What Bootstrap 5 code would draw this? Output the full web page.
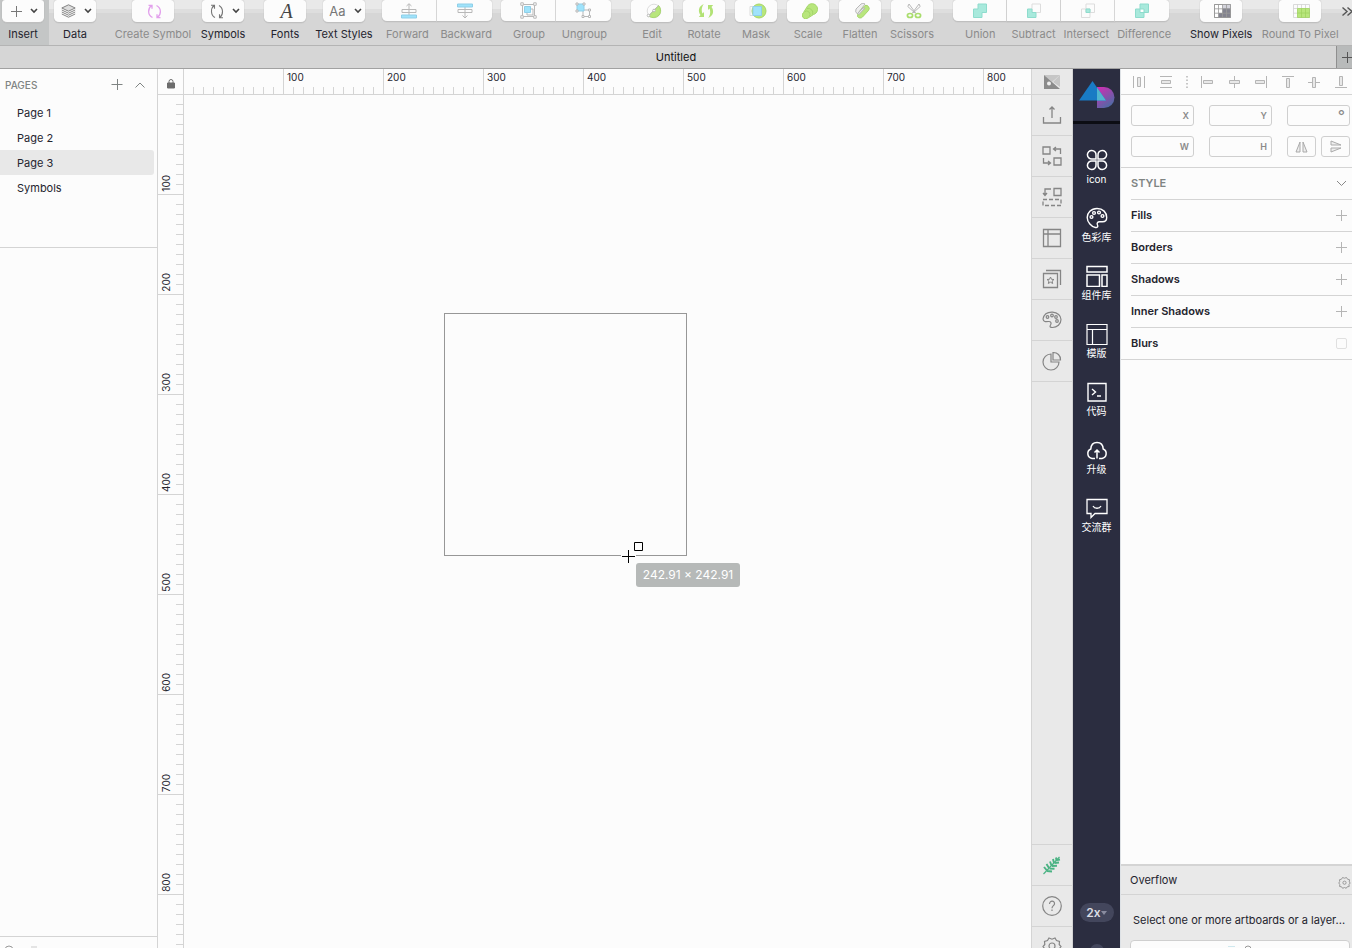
<!DOCTYPE html>
<html lang="en">
<head>
<meta charset="utf-8">
<meta name="viewport" content="width=device-width, initial-scale=1">
<title>Untitled</title>
<link href="https://cdn.jsdelivr.net/npm/bootstrap@5.3.0/dist/css/bootstrap.min.css" rel="stylesheet">
<style>
:root{--line:#d4d4d4;--ink:#24242e;--dim:#8b8b8b;--paper:#fcfcfc;--rail:#e9e9e9;--dark:#2b2d40}
body{font-family:Inter,"Liberation Sans","Noto Sans CJK SC",sans-serif;font-size:11px;line-height:16px;color:var(--ink);background:var(--paper)}
svg{display:block;flex:none}
svg:not([fill]){fill:none}
svg:not([stroke]){stroke:currentColor}
button{font:inherit;color:inherit;border:0;background:none;padding:0}
/* toolbar */
.toolbar{height:46px;border-bottom:1px solid #b4b4b4;background:linear-gradient(#e9e9e9 9px,#dedede 9px,#dedede 13px,#d6d6d6 13px)}
.tool{width:42px;flex:none;display:flex;flex-direction:column;align-items:center;white-space:nowrap;margin-left:10px}
.tool.first{width:49px;margin-left:0;padding-right:3px;background:#c4c6c6;align-self:stretch}
.tool.near{margin-left:8px}.tool.tight{margin-left:5px}.tool.far{margin-left:18px}.seg+.tool{margin-left:20px}
.tool.mid{width:46px}.tool.wide{width:60px}.tool.xwide{width:78px}
.tool button,.seg button{height:23px;background:var(--paper);border:solid #bfbfbf;border-width:0 0 1px;box-shadow:0 0 1px #9a9a9a;display:flex;align-items:center;justify-content:center;color:#777}
.tool button{width:42px;border-radius:3px 3px 5px 5px;gap:8px;padding-left:3px}
.tool span,.seg span{margin-top:3px}
.seg{margin-left:9px;flex:none}
.seg.near{margin-left:8px}
.seg.far{margin-left:18px}
.seg .btn-group button{width:55px;height:22px;margin-bottom:1px;border-right:1px solid #ddd}
.seg.four .btn-group button{width:54px}
.seg .btn-group button:first-child{border-radius:3px 0 0 5px}
.seg .btn-group button:last-child{border-radius:0 3px 5px 0;border-right:0}
.off,.off button{color:var(--dim)}
.off button,.tool.off button{color:#b8b8b8}
.letter{font:italic 20px/22px "Liberation Serif",serif;color:#444}
.aa{font-size:13px;color:#777}
.tabbar{height:23px;background:#d6d6d6;border-bottom:1px solid #a1a1a1;color:#111}
.tabadd{width:16px;background:#b8baba;border-left:1px solid #8f8f8f;overflow:hidden}
/* pages */
.pages{width:158px;border-right:1px solid var(--line)}
.cap{height:31px;padding-left:5px;font-size:10px;font-weight:500;color:#7f8483}
.pagelist{height:148px;border-bottom:1px solid var(--line)}
.pagelist a{display:block;height:25px;line-height:26px;padding-left:17px;margin-right:3px;color:var(--ink);text-decoration:none;border-radius:0 3px 3px 0}
.pagelist a.active{background:#e8e8e8}
.pagefoot{height:12px;border-top:1px solid var(--line);overflow:hidden;color:#999}
/* rulers */
.corner{width:26px;border-right:1px solid var(--line)}
.rulers{height:26px;border-bottom:1px solid var(--line);font-size:10px}
.hruler{background:repeating-linear-gradient(90deg,transparent 0 9px,var(--line) 9px 10px) bottom/100% 7px no-repeat}
.hruler span{width:100px;flex:none;border-right:1px solid var(--line);padding-left:3px}
.vruler{width:26px;border-right:1px solid var(--line);font-size:10px;background:repeating-linear-gradient(transparent 0 9px,var(--line) 9px 10px) right/7px 100% no-repeat}
.vruler div{height:100px;flex:none;border-bottom:1px solid var(--line);display:flex;align-items:flex-end;padding-bottom:2px}
.vruler span{writing-mode:vertical-rl;transform:rotate(180deg);line-height:16px}
.shape{left:260px;top:218px;width:243px;height:243px;border:1px solid #979797}
.cursor{left:436px;top:445px;color:#000}
.tip{left:452px;top:468px;width:104px;height:24px;line-height:24px;border-radius:3px;background:#b6b9b8;color:#fff;text-align:center;font-size:12px}
/* rails */
.rail{width:42px;background:var(--rail);border:solid var(--line);border-width:0 1px;color:#858585}
.rail button{height:41px;flex:none;border-bottom:1px solid var(--line);display:flex;align-items:center;justify-content:center}
.rail .short{height:26px}
.rail .foot{height:104px;overflow:hidden}
.rail .foot button{border-top:1px solid var(--line);border-bottom:0}
.kit{width:47px;background:var(--dark);color:#fff;font-size:10px;line-height:14px;font-family:Inter,"Noto Sans CJK SC",sans-serif}
.kit .brand{height:55px;border-bottom:3px solid #0c0d14;width:100%;display:flex;align-items:center;justify-content:center}
.kit .item{height:58px;display:flex;flex-direction:column;align-items:center;gap:1px;padding-top:25px}
.kit .item svg{width:22px;height:22px}
.pill{width:34px;height:19px;border-radius:10px;background:#43465c;color:#dcdde4;font-size:12px;font-weight:600}
.pill.cut{width:14px;height:14px;margin:22px 0 -10px}
/* inspector */
.inspector{width:232px}
.align{height:26px;border-bottom:1px solid var(--line);padding:0 4px 0 11px;color:#b5b5b5}
.fields{display:grid;grid-template-columns:63px 63px 63px;gap:10px 15px;padding:10px 0 10px 10px;border-bottom:1px solid var(--line)}
.field{position:relative}
.field input{width:100%;height:21px;border:1px solid #cfcfcf;border-radius:3px;background:#fcfcfc;padding:0 16px 0 4px;display:block;font-size:10px}
.field label{position:absolute;right:5px;top:3px;font-size:9px;font-weight:600;color:#8a8a8a}
.flip button{width:29px;height:21px;border:1px solid #cfcfcf;border-radius:3px;display:flex;align-items:center;justify-content:center;color:#aaa}
.prop{height:32px;margin-left:10px;padding:0 5px 1px 0;border-bottom:1px solid var(--line);font-weight:600;display:flex;align-items:center;justify-content:space-between}
.prop.last{margin-left:0;padding-left:10px}
.prop button{color:#b5b5b5}
.prop .form-check-input{width:11px;height:11px;margin:0;border:1px solid #e0e0e0;border-radius:2px;background:#fcfcfc}
.prop.head{color:#7f8483}
.overflowbox{height:84px;background:var(--rail);border-top:2px solid var(--line);overflow:hidden}
.overflowbox h2{font-size:11px;line-height:16px;font-weight:400;margin:0}
.overflowbox header{height:29px;border-bottom:1px solid var(--line);padding:0 1px 0 9px}
.overflowbox p{margin:17px 0 12px 12px;white-space:nowrap}
.bigbtn{width:220px;height:28px;margin-left:9px;background:var(--paper);border:1px solid #cfcfcf;border-radius:4px;overflow:hidden}
</style>
<script src="https://cdn.jsdelivr.net/npm/bootstrap@5.3.0/dist/js/bootstrap.bundle.min.js"></script>
</head>
<body class="vh-100 overflow-hidden d-flex flex-column">

<header class="toolbar d-flex flex-shrink-0 overflow-hidden">
  <div class="tool first"><button aria-label="Insert"><svg width="11" height="11"><path d="M0 5.5h11M5.5 0v11"/></svg><svg width="8" height="6" stroke="#444" stroke-width="1.6"><path d="M1 1l3 3 3-3"/></svg></button><span>Insert</span></div>
  <div class="tool tight"><button aria-label="Data"><svg width="15" height="14" stroke-width=".9"><path d="M.8 4 7.5.8 14.2 4 7.5 7.2z" fill="#ddd"/><path d="M.8 6l6.7 3.200L14.2 6M.8 8l6.7 3.200L14.2 8M.8 10l6.7 3.200L14.2 10"/></svg><svg width="8" height="6" stroke="#444" stroke-width="1.6"><path d="M1 1l3 3 3-3"/></svg></button><span>Data</span></div>
  <div class="tool far xwide off"><button aria-label="Create Symbol"><svg width="15" height="15" stroke="#e2a0ec" stroke-width="1.3"><path d="M5.500 13.500C.5 11 .5 4.500 4.500 1.500M1.500 1.300h3.500v3.500M9.500 1.500c5 2.500 5 9 1 12M13.500 13.700H10v-3.500"/></svg></button><span>Create Symbol</span></div>
  <div class="tool near mid"><button aria-label="Symbols"><svg width="14" height="15" stroke-width="1.1"><path d="M5 13.500C.5 11 .5 4.500 4 1.500M1 1.300h3.500v3.500M9 1.500c4.500 2.500 4.500 9 1 12M13 13.700H9.500v-3.500"/></svg><svg width="8" height="6" stroke="#444" stroke-width="1.6"><path d="M1 1l3 3 3-3"/></svg></button><span>Symbols</span></div>
  <div class="tool far"><button aria-label="Fonts"><i class="letter">A</i></button><span>Fonts</span></div>
  <div class="tool near wide"><button aria-label="Text Styles"><b class="aa fw-normal">Aa</b><svg width="8" height="6" stroke="#444" stroke-width="1.6"><path d="M1 1l3 3 3-3"/></svg></button><span>Text Styles</span></div>

  <div class="seg near off">
    <div class="btn-group d-flex">
      <button aria-label="Forward"><svg width="16" height="16"><path d="M8 12V1M5.500 3 8 .7 10.500 3M1 6.500h14v3H1z"/><path d="M.5 12h15v3H.5z" fill="#9fe3fb" stroke="#8fcfe8"/></svg></button>
      <button aria-label="Backward"><svg width="16" height="16"><path d="M8 4v11M5.500 12.500 8 15l2.500-2.500M1 6.500h14v3H1z"/><path d="M.5 1h15v3H.5z" fill="#9fe3fb" stroke="#8fcfe8"/></svg></button>
    </div>
    <div class="d-flex justify-content-between ps-1"><span>Forward</span><span>Backward</span></div>
  </div>
  <div class="seg off">
    <div class="btn-group d-flex">
      <button aria-label="Group"><svg width="17" height="17"><path d="M2.500 2.500h12v12h-12zM8 7h5v6H7v-3"/><path d="M4.500 4.500h6v6h-6z" fill="#9fe3fb" stroke="#8fcfe8"/><path d="M.8.8h2.500v2.500H.8zM13.700.8h2.500v2.500h-2.500zM.8 13.700h2.500v2.500H.8zM13.700 13.700h2.500v2.500h-2.500z" fill="#fff"/></svg></button>
      <button aria-label="Ungroup"><svg width="17" height="17"><path d="M8 8h6.500v6.500H8z"/><path d="M2 2h7v7H2z" fill="#9fe3fb" stroke="#8fcfe8"/><path d="M1 1h2v2H1zM8 1h2v2H8zM1 8h2v2H1zM7 13.500h2v2H7zM13.500 13.500h2v2h-2zM13.500 7h2v2h-2z" fill="#fff"/></svg></button>
    </div>
    <div class="d-flex justify-content-between ps-2 pe-1"><span class="ps-1">Group</span><span>Ungroup</span></div>
  </div>

  <div class="tool off"><button aria-label="Edit"><svg width="16" height="16"><circle cx="8" cy="8" r="6.800" stroke="#ddd"/><path d="M2.500 13C6 15.500 12 15 14 10.500c1-3 .5-6-1.500-8z" fill="#b8e67c" stroke="#a5d66a"/><path d="M2.500 13 12.500 2.500"/><circle cx="2.500" cy="12.500" r="1.300" fill="#fff"/><circle cx="8" cy="7.500" r="1.300" fill="#fff"/></svg></button><span>Edit</span></div>
  <div class="tool off"><button aria-label="Rotate"><svg width="16" height="16" stroke="none" fill="#b2e275"><path d="M6 1C0 3 0 9 2.500 12L.8 14H6V9L4.500 10.500C3 7 4 3 6 1zM10 15c6-2 6-8 3.500-11L15.200 2H10v5l1.500-1.500C13 9 12 13 10 15z"/></svg></button><span>Rotate</span></div>
  <div class="tool off"><button aria-label="Mask"><svg width="18" height="16"><path d="M1 3.500h8v9H1z" stroke="#ddd"/><circle cx="10" cy="8" r="7" fill="#b8e67c" stroke="#a5d66a"/><path d="M4 3.500h8.500v9H4z" fill="#9fe3fb" stroke="#8fcfe8"/></svg></button><span>Mask</span></div>
  <div class="tool off"><button aria-label="Scale"><svg width="16" height="16" fill="#b8e67c" stroke="#a5d66a"><path d="M1.500 9.500 5 4a5.500 5.500 0 1 1 6.500 7.500L6 15a3 3 0 0 1-4.500-5.500z"/><path d="M2.500 9a3 3 0 0 1 4.500 4.500M5 5.500a4.500 4.500 0 0 1 5.500 6"/></svg></button><span>Scale</span></div>
  <div class="tool off"><button aria-label="Flatten"><svg width="16" height="16"><path d="M2 6l5-5a3 3 0 0 1 4 0L3.500 11A4 4 0 0 1 2 6z" fill="#eee"/><path d="M4 10 11 2.500a3.200 3.200 0 0 1 3.500 5l-6 6.500A3.200 3.200 0 0 1 3.500 13.500z" fill="#b8e67c" stroke="#a5d66a"/><path d="M3.500 10.500 9 5l2 0-6 6.500z" fill="#e4e4e4"/></svg></button><span>Flatten</span></div>
  <div class="tool near mid off"><button aria-label="Scissors"><svg width="16" height="16"><path d="M3 1l7 9.500M1.800 3.500 9 10M3 1 1.800 3.500M13 1 6 10.500M14.200 3.500 7 10M13 1l1.200 2.500"/><ellipse cx="4" cy="12.500" rx="2.600" ry="2" stroke="#a9dd6c" stroke-width="1.7"/><ellipse cx="12" cy="12.500" rx="2.600" ry="2" stroke="#a9dd6c" stroke-width="1.7"/></svg></button><span>Scissors</span></div>

  <div class="seg far four off">
    <div class="btn-group d-flex">
      <button aria-label="Union"><svg width="16" height="16"><path d="M6 1h8.500v8.500H10v5H1.500V6H6z" fill="#a8e9dc" stroke="#8edccd"/></svg></button>
      <button aria-label="Subtract"><svg width="16" height="16"><path d="M6 1h8.500v8.500H6z" stroke="#ddd"/><path d="M1.500 6H6v3.500h4v5H1.500z" fill="#a8e9dc" stroke="#8edccd"/></svg></button>
      <button aria-label="Intersect"><svg width="16" height="16" stroke="#ddd"><path d="M6 1h8.500v8.500H6zM1.500 6H10v8.500H1.500z"/><path d="M6 6h4v3.500H6z" fill="#a8e9dc" stroke="#8edccd"/></svg></button>
      <button aria-label="Difference"><svg width="16" height="16"><path d="M6 1h8.500v8.500H10v5H1.500V6H6z" fill="#a8e9dc" stroke="#8edccd"/><path d="M6 6h4v3.500H6z" fill="#fff" stroke="#8edccd"/></svg></button>
    </div>
    <div class="d-flex gap-2 ps-2"><span class="ps-1 pe-2">Union</span><span>Subtract</span><span>Intersect</span><span>Difference</span></div>
  </div>

  <div class="tool wide"><button aria-label="Show Pixels"><svg width="17" height="14" stroke="#999"><path d="M.5.5h16v13H.5z" fill="#fff"/><path d="M8.500.5h8v5h-8z" fill="#d4d4dc" stroke="none"/><path d="M4.500 9h4V4.500h8v9h-12z" fill="#83838f" stroke="none"/><path d="M.5 4.800h16M.5 9.200h16M4.500.5v13M8.500.5v13M12.500.5v13M.5.5h16v13H.5z" stroke-width=".8"/></svg></button><span>Show Pixels</span></div>
  <div class="tool xwide off"><button aria-label="Round To Pixel"><svg width="17" height="14" stroke="#d0d0d0"><path d="M4.500 4.500h12v9h-12z" fill="#b8e67c" stroke="none"/><path d="M.5.5h16v13H.5zM.5 9.200h4M4.500.5v4M8.500.5v4M12.500.5v4M.5 4.500h4" stroke-width=".8"/><path d="M4.500 4.500h12v9h-12zM8.500 4.500v9M12.500 4.500v9M4.500 9h12" stroke="#a0d35f" stroke-width=".8"/></svg></button><span>Round To Pixel</span></div>
  <button class="ms-auto align-self-start mt-1" aria-label="More tools"><svg width="10" height="14" stroke="#555" stroke-width="1.4"><path d="M.5 3.500 5 7.500.5 11.500M5.500 3.500 10 7.500l-4.500 4"/></svg></button>
</header>

<div class="tabbar d-flex flex-shrink-0">
  <div class="flex-fill text-center lh-lg ps-3">Untitled</div>
  <button class="tabadd d-flex align-items-center ps-1" aria-label="New tab"><svg width="12" height="12" stroke="#555"><path d="M1 6.500h11M6.500 1v11"/></svg></button>
</div>

<main class="d-flex flex-fill overflow-hidden">
  <aside class="pages d-flex flex-column flex-shrink-0">
    <div class="d-flex align-items-center cap pe-2 gap-2"><span class="me-auto">PAGES</span>
      <button aria-label="Add page" class="me-1"><svg width="12" height="12"><path d="M.5 5.500h11M6.500 0v11"/></svg></button>
      <button aria-label="Collapse" class="me-1"><svg width="10" height="6"><path d="M.5 5.500 5 1l4.500 4.500"/></svg></button></div>
    <nav class="pagelist"><a href="#">Page 1</a><a href="#">Page 2</a><a href="#" class="active">Page 3</a><a href="#">Symbols</a></nav>
    <div class="pagefoot mt-auto d-flex ps-1 pt-2 gap-3"><svg width="10" height="10"><circle cx="5" cy="5" r="4"/></svg><svg width="10" height="10" stroke="#ccc"><path d="M1 2h6"/></svg></div>
  </aside>

  <section class="flex-fill d-flex flex-column overflow-hidden">
    <div class="rulers d-flex flex-shrink-0">
      <div class="corner flex-shrink-0 d-flex align-items-center justify-content-center pt-1"><svg width="8" height="10" stroke="#6c6c6c"><path d="M.5 4h7v5h-7z" fill="#6c6c6c"/><path d="M2 4V2.500a2 2 0 0 1 4 0V4"/></svg></div>
      <div class="hruler flex-fill d-flex overflow-hidden"><span></span><span>100</span><span>200</span><span>300</span><span>400</span><span>500</span><span>600</span><span>700</span><span>800</span></div>
    </div>
    <div class="d-flex flex-fill overflow-hidden">
      <div class="vruler flex-shrink-0 overflow-hidden d-flex flex-column"><div><span>100</span></div><div><span>200</span></div><div><span>300</span></div><div><span>400</span></div><div><span>500</span></div><div><span>600</span></div><div><span>700</span></div><div><span>800</span></div><div></div></div>
      <div class="flex-fill position-relative overflow-hidden">
        <div class="shape position-absolute"></div>
        <svg class="cursor position-absolute" width="26" height="26"><path d="M1 15.500h15" stroke="#fcfcfc" stroke-width="3"/><path d="M2 16.500h13M8.500 10v13M14.500 2.500h8v8h-8z"/></svg>
        <div class="tip position-absolute">242.91 × 242.91</div>
      </div>
    </div>
  </section>

  <nav class="rail d-flex flex-column flex-shrink-0" aria-label="Plugins">
    <button class="short" aria-label="Craft"><svg width="16" height="14" stroke="none"><path d="M0 0h16L8 7z" fill="#c6c6c6"/><path d="M0 0l16 14H0z" fill="#8b8b8b"/><path d="M16 0v12L9 7z" fill="#c6c6c6"/><circle cx="5" cy="8.500" r="2" fill="#eee"/></svg></button>
    <button aria-label="Export"><svg width="20" height="20" stroke-width="1.3"><path d="M1.500 12v6h17v-6M10 13V2M7.500 4.500 10 2l2.500 2.500"/></svg></button>
    <button aria-label="Swap symbols"><svg width="20" height="20" stroke-width="1.3"><path d="M1 1h7v7H1zM12 12h7v7h-7zM18.500 8V3H12M14 1l-2.500 2L14 5M1.500 12v5H8M6 15l2.500 2L6 19"/></svg></button>
    <button aria-label="Replace"><svg width="20" height="20" stroke-width="1.3"><path d="M12 1.500h7v7h-7zM9 2H3v6M1 6l2 2.500L5 6"/><path d="M1 12.500h18v6H1z" stroke-dasharray="4 2"/></svg></button>
    <button aria-label="Template"><svg width="20" height="20" stroke-width="1.3"><path d="M1.500 1.500h17v17h-17zM6 1.500v17M1.500 6h17"/></svg></button>
    <button aria-label="Library"><svg width="20" height="20" stroke-width="1.3"><path d="M1.500 4.500h14v14h-14zM4 1.500h14.500V16"/><path d="M8.500 8l1 2.300 2.500.2-1.900 1.600.6 2.400-2.200-1.300-2.200 1.300.6-2.400L5 10.500l2.500-.2z" stroke-width="1"/></svg></button>
    <button aria-label="Palette"><svg width="20" height="18" stroke-width="1.2"><path d="M1 8C2 3 6 1 10.500 1.200 15.500 1.500 19 4.500 19 8.500c0 4.500-4 8-8.500 8-2.500 0-3-1-2-2.500 1.200-2 .5-3.700-2-3.500-3 .3-5 .5-5.500-2.500z"/><circle cx="5.500" cy="6" r="1.300"/><circle cx="10" cy="4.500" r="1.300"/><circle cx="14" cy="6" r="1.300"/><circle cx="15" cy="10" r="1.300"/></svg></button>
    <button aria-label="Charts"><svg width="20" height="20" stroke-width="1.2"><path d="M9 3a8 8 0 1 0 8 8H9z"/><path d="M11 1.500A7 7 0 0 1 18.500 9H11z"/></svg></button>
    <div class="foot mt-auto d-flex flex-column">
      <button aria-label="Fern"><svg width="20" height="20" stroke="#4bb384" stroke-width="1.9"><path d="M1.500 19 17.500 2" stroke-width="1.2"/><path d="M5 15.500l-3-3.500M7 13 4.500 9M9.500 10.500 8 6.500M12 8l-1-4M14.500 5.500l-.5-3M5 16l5 .5M7.500 13.500l5 .3M10 11l5-.2M12.500 8l4.500-.5M15 5l3-.5"/></svg></button>
      <button aria-label="Help"><svg width="22" height="22" stroke-width="1.2"><circle cx="11" cy="11" r="9.300"/><path d="M8.500 9c0-4 5.500-3.500 5 0-.2 1.600-2.500 2-2.500 4.200M11 14.500V16"/></svg></button>
      <button aria-label="Settings" class="align-items-start pt-2"><svg width="20" height="20" stroke-width="1.2"><path d="M7 3l3 1.200L13 3l1.500 2.500 3 1-.3 3 1.800 2-1.800 2.500.3 3H2.500l.3-3L1 11.500l1.800-2-.3-3 3-1z"/><circle cx="10" cy="11" r="3"/></svg></button>
    </div>
  </nav>

  <nav class="kit d-flex flex-column align-items-center flex-shrink-0 overflow-hidden" aria-label="Kit">
    <div class="brand flex-shrink-0"><svg width="36" height="30" stroke="none"><defs><linearGradient id="dg" x1="0" y1="0" x2=".6" y2="1"><stop offset="0" stop-color="#d62bb4"/><stop offset="1" stop-color="#4f6aa5"/></linearGradient></defs><path d="M18 7h7a10.500 10.500 0 0 1 0 21h-7z" fill="url(#dg)"/><path d="M13.500 1 27 20.500H0z" fill="#197bc4"/><path d="M18 7.500 27 20.500h-9z" fill="#50b5cf"/></svg></div>
    <button class="item"><svg viewBox="0 0 22 22" stroke-width="1.5"><path d="M10 10H6a4.300 4.300 0 1 1 4-4zM12 10V6a4.300 4.300 0 1 1 4 4zM10 12v4a4.300 4.300 0 1 1-4-4zM12 12h4a4.300 4.300 0 1 1-4 4z"/></svg>icon</button>
    <button class="item"><svg viewBox="0 0 22 22" stroke-width="1.4"><path d="M11 1.500C5 1.500 1.200 6 1.200 10.500S5.500 20 9.500 20.500c2 .3 2.800-1 2-2.500-1-2 .2-3.200 2-3.200h3c3 0 4.200-1.800 4.200-4.300C20.700 5.500 17 1.500 11 1.500z"/><circle cx="5.500" cy="10" r="1.400"/><circle cx="8" cy="6" r="1.400"/><circle cx="13" cy="5.500" r="1.400"/><circle cx="16.500" cy="9" r="1.400"/></svg>色彩库</button>
    <button class="item"><svg viewBox="0 0 22 22" stroke-width="1.5"><path d="M1 1.500h20v5.500H1zM1 10h12.500v11.500H1zM16 10h5v11.500h-5z"/></svg>组件库</button>
    <button class="item"><svg viewBox="0 0 22 22" stroke-width="1.2"><path d="M1 1.500h20v20H1zM1 6.500h20M6.500 6.500v15"/></svg>模版</button>
    <button class="item"><svg viewBox="0 0 22 22" stroke-width="1.4"><path d="M2 2.500h18v17.500H2zM6 8l3.500 3L6 14M11 15h4"/></svg>代码</button>
    <button class="item"><svg viewBox="0 0 22 22" stroke-width="1.5"><path d="M9 19.500H6a5 5 0 0 1-1.200-9.500C5 6 7.500 3.500 11 3.500S17 6 17.200 10A5 5 0 0 1 16 19.500h-3M11 19.500v-8M8.500 13.500 11 11l2.500 2.500"/></svg>升级</button>
    <button class="item"><svg viewBox="0 0 22 22" stroke-width="1.3"><path d="M1 2.500h20V16.500H9L5 20.500v-4H1zM7 9c1.500 3 6.500 3 8 0"/></svg>交流群</button>
    <button class="pill mt-auto d-flex align-items-center justify-content-center flex-shrink-0">2x<svg width="6" height="4" stroke="none"><path d="M0 0h6L3 4z" fill="#8a8ca0"/></svg></button>
    <div class="pill cut flex-shrink-0"></div>
  </nav>

  <aside class="inspector d-flex flex-column flex-shrink-0 border-start">
    <div class="align d-flex align-items-center justify-content-between flex-shrink-0">
      <button aria-label="Distribute horizontally"><svg width="14" height="14"><path d="M1.500 1v12M12.500 1v12"/><path d="M5.500 2.500h3v9h-3z" fill="#e8e8e8"/></svg></button>
      <button aria-label="Distribute vertically"><svg width="14" height="14"><path d="M1 1.500h12M1 12.500h12"/><path d="M2.500 5.500h9v3h-9z" fill="#e8e8e8"/></svg></button>
      <svg width="2" height="14"><path d="M1 1v12" stroke-width="1.5" stroke-dasharray="1.5 2"/></svg>
      <button aria-label="Align left"><svg width="14" height="14"><path d="M1.500 1v12"/><path d="M3.500 5.500h9v3h-9z" fill="#e8e8e8"/></svg></button>
      <button aria-label="Align center"><svg width="14" height="14"><path d="M7.500 1v12"/><path d="M2.500 5.500h10v3h-10z" fill="#e8e8e8"/></svg></button>
      <button aria-label="Align right"><svg width="14" height="14"><path d="M12.500 1v12"/><path d="M1.500 5.500h9v3h-9z" fill="#e8e8e8"/></svg></button>
      <button aria-label="Align top"><svg width="14" height="14"><path d="M1 1.500h12"/><path d="M5.500 3.500h3v9h-3z" fill="#e8e8e8"/></svg></button>
      <button aria-label="Align middle"><svg width="14" height="14"><path d="M1 7.500h12"/><path d="M5.500 2.500h3v10h-3z" fill="#e8e8e8"/></svg></button>
      <button aria-label="Align bottom"><svg width="14" height="14"><path d="M1 12.500h12"/><path d="M5.500 1.500h3v9h-3z" fill="#e8e8e8"/></svg></button>
    </div>
    <div class="fields">
      <div class="field"><input id="fx"><label for="fx">X</label></div>
      <div class="field"><input id="fy"><label for="fy">Y</label></div>
      <div class="field"><input id="fr"><label for="fr" class="fs-6 fw-normal">°</label></div>
      <div class="field"><input id="fw"><label for="fw">W</label></div>
      <div class="field"><input id="fh"><label for="fh">H</label></div>
      <div class="flip d-flex justify-content-between">
        <button aria-label="Flip horizontally"><svg width="13" height="12"><path d="M5 1v10H1zM8 1v10h4z" fill="#eee"/></svg></button>
        <button aria-label="Flip vertically"><svg width="12" height="13"><path d="M1 5h10L1 1zM1 8h10L1 12z" fill="#eee"/></svg></button>
      </div>
    </div>
    <div class="prop head">STYLE<button aria-label="Collapse style"><svg width="11" height="7" stroke="#888"><path d="M1 1l4.500 4.500L10 1"/></svg></button></div>
    <div class="prop">Fills<button aria-label="Add fill"><svg width="11" height="11"><path d="M0 5.500h11M5.500 0v11"/></svg></button></div>
    <div class="prop">Borders<button aria-label="Add border"><svg width="11" height="11"><path d="M0 5.500h11M5.500 0v11"/></svg></button></div>
    <div class="prop">Shadows<button aria-label="Add shadow"><svg width="11" height="11"><path d="M0 5.500h11M5.500 0v11"/></svg></button></div>
    <div class="prop">Inner Shadows<button aria-label="Add inner shadow"><svg width="11" height="11"><path d="M0 5.500h11M5.500 0v11"/></svg></button></div>
    <div class="prop last"><label for="blur">Blurs</label><input class="form-check-input" type="checkbox" id="blur"></div>
    <div class="overflowbox mt-auto flex-shrink-0">
      <header class="d-flex align-items-center justify-content-between"><h2>Overflow</h2><button aria-label="Overflow settings" class="pt-1"><svg width="13" height="13" stroke="#999"><path d="M4.500 1.500l2 .7 2-.7 1 1.700 2 .5-.2 2.200.9 1.100-1.200 1.500.2 2-2 .3-1 1.500-1.700-.8-1.900.8-1-1.500-2-.3.2-2L.8 7l.9-1.500-.2-1.800 2-.5z"/><circle cx="6.500" cy="6.700" r="1.600"/></svg></button></header>
      <p>Select one or more artboards or a layer...</p>
      <button class="bigbtn d-flex justify-content-center gap-2 pt-1" aria-label="Enable"><svg width="8" height="8" stroke="#cfe8ee"><path d="M0 1.500h7"/></svg><svg width="8" height="8" stroke="#999"><circle cx="4" cy="4" r="3"/></svg></button>
    </div>
  </aside>
</main>
</body>
</html>
